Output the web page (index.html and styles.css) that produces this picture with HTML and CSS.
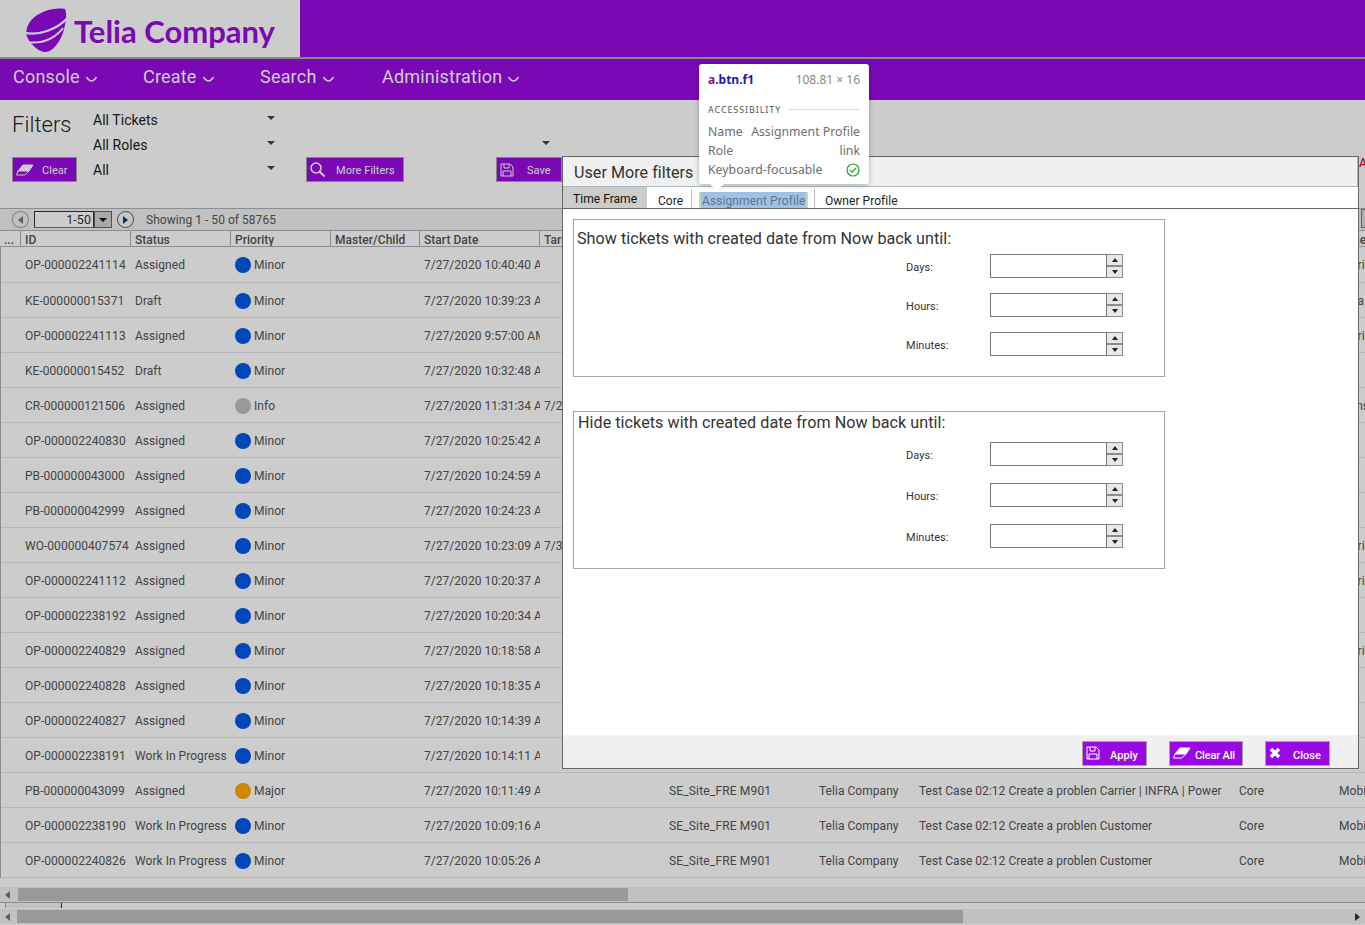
FILE: index.html
```html
<!DOCTYPE html>
<html lang="en">
<head>
    <meta charset="UTF-8">
    <title>Telia Company - Console</title>
    <link rel="stylesheet" href="styles.css">
</head>
<body>
    <!-- Top banner -->
    <header class="banner">
        <div class="logo">
            <svg class="logo-globe" viewBox="0 0 42 46" width="41" height="44" preserveAspectRatio="none">
                <path fill="#990ae3" d="M40 1C30-1 14 3 6 12 0 19-1 26 2 32c4 8 12 14 18 14 8 0 16-12 19-24 2-8 3-16 1-21z"/>
                <path fill="none" stroke="#fff" stroke-width="2.4" d="M-1 26C14 29 32 22 42 11"/>
                <path fill="none" stroke="#fff" stroke-width="2" d="M4 36c14 1 26-5 34-15"/>
            </svg>
            <span class="logo-text">Telia Company</span>
        </div>
    </header>

    <!-- Main menu -->
    <nav class="menu">
        <a class="menu-item m-console">Console <svg class="chev" viewBox="0 0 12 6" width="13" height="6"><path d="M1 1c2 3 4 4 5 4s3-1 5-4"/></svg></a>
        <a class="menu-item m-create">Create <svg class="chev" viewBox="0 0 12 6" width="13" height="6"><path d="M1 1c2 3 4 4 5 4s3-1 5-4"/></svg></a>
        <a class="menu-item m-search">Search <svg class="chev" viewBox="0 0 12 6" width="13" height="6"><path d="M1 1c2 3 4 4 5 4s3-1 5-4"/></svg></a>
        <a class="menu-item">Administration <svg class="chev" viewBox="0 0 12 6" width="13" height="6"><path d="M1 1c2 3 4 4 5 4s3-1 5-4"/></svg></a>
    </nav>

    <!-- Filters -->
    <section class="filters">
        <div class="filters-left">
            <h2>Filters</h2>
            <a class="btn btn-clear">
                <svg class="ico ico-eraser" viewBox="0 0 18 12" width="18" height="12"><path class="solid" d="M7 1h10l-4 6H2z"/><path d="M2 7L.5 11h8L13 7"/></svg>
                Clear
            </a>
        </div>
        <div class="filters-selects">
            <div class="select">All Tickets<i class="arrow"></i></div>
            <div class="select">All Roles<i class="arrow"></i></div>
            <div class="select">All<i class="arrow"></i></div>
        </div>
        <a class="btn btn-more">
            <svg class="ico ico-search" viewBox="0 0 15 15" width="15" height="15"><circle cx="6" cy="6" r="5"/><path d="M9.5 9.5l5 5" stroke-width="2"/></svg>
            More Filters
        </a>
        <div class="filters-right">
            <i class="arrow"></i>
            <a class="btn btn-save">
                <svg class="ico" viewBox="0 0 14 14" width="14" height="14"><path d="M1 1h9l3 3v9H1zM4 1v4h5V1M3 13V8h8v5"/></svg>
                Save
            </a>
        </div>
        <span class="alert-edge">Al</span>
    </section>

    <!-- Pager -->
    <div class="pager">
        <span class="pager-wrap"><span class="pager-btn"><i class="tri tri-left"></i></span></span>
        <span class="pager-input">1-50</span>
        <span class="pager-drop"><i class="arrow"></i></span>
        <span class="pager-wrap pager-next"><span class="pager-btn"><i class="tri tri-right"></i></span></span>
        <span class="pager-text">Showing 1 - 50 of 58765</span>
        <span class="pager-edge"></span>
    </div>

    <!-- Ticket grid -->
    <div class="grid-head">
        <span class="h-more">...</span>
        <span class="h-id">ID</span>
        <span class="h-status">Status</span>
        <span class="h-priority">Priority</span>
        <span class="h-master">Master/Child</span>
        <span class="h-date">Start Date</span>
        <span class="h-target">Target Date</span>
        <span class="h-rest"></span>
        <span class="h-last">Zone</span>
    </div>
    <div class="grid-body">
        <div class="row"><span>OP-000002241114</span><span>Assigned</span><span class="pri"><i class="dot minor"></i>Minor</span><span class="date">7/27/2020 10:40:40 AM</span><span class="edge">Carrier</span></div>
        <div class="row"><span>KE-000000015371</span><span>Draft</span><span class="pri"><i class="dot minor"></i>Minor</span><span class="date">7/27/2020 10:39:23 AM</span><span class="edge">Data</span></div>
        <div class="row"><span>OP-000002241113</span><span>Assigned</span><span class="pri"><i class="dot minor"></i>Minor</span><span class="date">7/27/2020 9:57:00 AM</span><span class="edge">Carrier</span></div>
        <div class="row"><span>KE-000000015452</span><span>Draft</span><span class="pri"><i class="dot minor"></i>Minor</span><span class="date">7/27/2020 10:32:48 AM</span></div>
        <div class="row"><span>CR-000000121506</span><span>Assigned</span><span class="pri"><i class="dot info"></i>Info</span><span class="date">7/27/2020 11:31:34 AM</span><span>7/27/2020</span><span class="edge">Transport</span></div>
        <div class="row"><span>OP-000002240830</span><span>Assigned</span><span class="pri"><i class="dot minor"></i>Minor</span><span class="date">7/27/2020 10:25:42 AM</span></div>
        <div class="row"><span>PB-000000043000</span><span>Assigned</span><span class="pri"><i class="dot minor"></i>Minor</span><span class="date">7/27/2020 10:24:59 AM</span></div>
        <div class="row"><span>PB-000000042999</span><span>Assigned</span><span class="pri"><i class="dot minor"></i>Minor</span><span class="date">7/27/2020 10:24:23 AM</span></div>
        <div class="row"><span>WO-000000407574</span><span>Assigned</span><span class="pri"><i class="dot minor"></i>Minor</span><span class="date">7/27/2020 10:23:09 AM</span><span>7/30/2020</span><span class="edge">Carrier</span></div>
        <div class="row"><span>OP-000002241112</span><span>Assigned</span><span class="pri"><i class="dot minor"></i>Minor</span><span class="date">7/27/2020 10:20:37 AM</span><span class="edge">Carrier</span></div>
        <div class="row"><span>OP-000002238192</span><span>Assigned</span><span class="pri"><i class="dot minor"></i>Minor</span><span class="date">7/27/2020 10:20:34 AM</span></div>
        <div class="row"><span>OP-000002240829</span><span>Assigned</span><span class="pri"><i class="dot minor"></i>Minor</span><span class="date">7/27/2020 10:18:58 AM</span><span class="edge">Carrier</span></div>
        <div class="row"><span>OP-000002240828</span><span>Assigned</span><span class="pri"><i class="dot minor"></i>Minor</span><span class="date">7/27/2020 10:18:35 AM</span></div>
        <div class="row"><span>OP-000002240827</span><span>Assigned</span><span class="pri"><i class="dot minor"></i>Minor</span><span class="date">7/27/2020 10:14:39 AM</span></div>
        <div class="row"><span>OP-000002238191</span><span>Work In Progress</span><span class="pri"><i class="dot minor"></i>Minor</span><span class="date">7/27/2020 10:14:11 AM</span></div>
        <div class="row"><span>PB-000000043099</span><span>Assigned</span><span class="pri"><i class="dot major"></i>Major</span><span class="date">7/27/2020 10:11:49 AM</span><span></span><span class="site">SE_Site_FRE M901</span><span>Telia Company</span><span>Test Case 02:12 Create a problen Carrier | INFRA | Power</span><span>Core</span><span>Mobile</span></div>
        <div class="row"><span>OP-000002238190</span><span>Work In Progress</span><span class="pri"><i class="dot minor"></i>Minor</span><span class="date">7/27/2020 10:09:16 AM</span><span></span><span class="site">SE_Site_FRE M901</span><span>Telia Company</span><span>Test Case 02:12 Create a problen Customer</span><span>Core</span><span>Mobile</span></div>
        <div class="row"><span>OP-000002240826</span><span>Work In Progress</span><span class="pri"><i class="dot minor"></i>Minor</span><span class="date">7/27/2020 10:05:26 AM</span><span></span><span class="site">SE_Site_FRE M901</span><span>Telia Company</span><span>Test Case 02:12 Create a problen Customer</span><span>Core</span><span>Mobile</span></div>
    </div>

    <!-- Scrollbars -->
    <div class="scroll scroll-inner"><i class="tri tri-left"></i><span class="thumb thumb-inner"></span></div>
    <div class="scroll-gap"><span class="gap-mark"></span></div>
    <div class="scroll scroll-page"><i class="tri tri-left"></i><span class="thumb thumb-page"></span><i class="tri tri-right"></i></div>

    <!-- Dim layer behind the dialog -->
    <div class="overlay"></div>

    <!-- Dialog -->
    <div class="dialog">
        <div class="dialog-title">User More filters</div>
        <div class="tabs">
            <a class="tab tab-active">Time Frame</a>
            <a class="tab tab-core">Core</a>
            <a class="tab tab-assign"><span class="tab-hl">Assignment Profile</span></a>
            <a class="tab tab-owner">Owner Profile</a>
        </div>
        <div class="dialog-body">
            <fieldset class="group">
                <h3>Show tickets with created date from Now back until:</h3>
                <div class="field"><label>Days:</label><span class="num"></span><span class="spin"><b><i class="up"></i></b><b><i class="down"></i></b></span></div>
                <div class="field"><label>Hours:</label><span class="num"></span><span class="spin"><b><i class="up"></i></b><b><i class="down"></i></b></span></div>
                <div class="field"><label>Minutes:</label><span class="num"></span><span class="spin"><b><i class="up"></i></b><b><i class="down"></i></b></span></div>
            </fieldset>
            <fieldset class="group group-hide">
                <h3>Hide tickets with created date from Now back until:</h3>
                <div class="field"><label>Days:</label><span class="num"></span><span class="spin"><b><i class="up"></i></b><b><i class="down"></i></b></span></div>
                <div class="field"><label>Hours:</label><span class="num"></span><span class="spin"><b><i class="up"></i></b><b><i class="down"></i></b></span></div>
                <div class="field"><label>Minutes:</label><span class="num"></span><span class="spin"><b><i class="up"></i></b><b><i class="down"></i></b></span></div>
            </fieldset>
        </div>
        <div class="dialog-foot">
            <a class="btn btn-apply">
                <svg class="ico" viewBox="0 0 14 14" width="14" height="14"><path d="M1 1h9l3 3v9H1zM4 1v4h5V1M3 13V8h8v5"/></svg>
                Apply
            </a>
            <a class="btn btn-clearall">
                <svg class="ico ico-eraser" viewBox="0 0 18 12" width="18" height="12"><path class="solid" d="M7 1h10l-4 6H2z"/><path d="M2 7L.5 11h8L13 7"/></svg>
                Clear All
            </a>
            <a class="btn btn-close">
                <svg class="ico ico-x" viewBox="0 0 12 12" width="12" height="12"><path d="M2 2l8 8M10 2l-8 8"/></svg>
                Close
            </a>
        </div>
    </div>

    <!-- Inspector tooltip -->
    <div class="inspect">
        <div class="inspect-top">
            <span class="inspect-sel"><b class="tag">a</b><b class="cls">.btn.f1</b></span>
            <span class="inspect-size">108.81 × 16</span>
        </div>
        <div class="inspect-sec">ACCESSIBILITY</div>
        <div class="inspect-row"><span>Name</span><span>Assignment Profile</span></div>
        <div class="inspect-row"><span>Role</span><span>link</span></div>
        <div class="inspect-row"><span>Keyboard-focusable</span>
            <svg viewBox="0 0 14 14" width="14" height="14"><circle cx="7" cy="7" r="6" fill="none" stroke="#1fa81f" stroke-width="1.2"/><path d="M4 7l2.2 2.2L10 5" fill="none" stroke="#1fa81f" stroke-width="1.2"/></svg>
        </div>
    </div>
</body>
</html>
```

FILE: styles.css
```css
/* general */
body {
    margin: 0;
    width: 1365px;
    height: 925px;
    overflow: hidden;
    position: relative;
    background: #fff;
    font-family: Roboto, sans-serif;
    font-size: 12px;
    letter-spacing: 0.04px;
    color: #555;
}

/* banner and menu */
.banner {
    height: 57px;
    background: #990ae3;
    border-bottom: 2px solid #a9a9a9;
}

.logo {
    width: 300px;
    height: 57px;
    background: #fff;
    display: flex;
    align-items: center;
    padding-left: 26px;
    box-sizing: border-box;
}

.logo-globe {
    overflow: visible;
    flex: none;
    margin-top: 2px;
}

.logo-text {
    margin: 4px 0 0 7px;
    font-family: Lato, sans-serif;
    font-weight: 700;
    font-size: 31px;
    letter-spacing: 0;
    color: #990ae3;
}

.menu {
    height: 41px;
    background: #990ae3;
    display: flex;
    align-items: center;
    padding-left: 13px;
    font-size: 18px;
    letter-spacing: 0.2px;
    color: #fff;
    box-sizing: border-box;
}

.menu-item {
    display: flex;
    align-items: center;
    gap: 5px;
    padding-bottom: 6px;
}

.m-console { width: 130px; }
.m-create { width: 117px; }
.m-search { width: 122px; }

.chev {
    margin-top: 4px;
    fill: none;
    stroke: #fff;
    stroke-width: 1.4;
}

/* filters */
.filters {
    position: relative;
    height: 108px;
    display: flex;
    box-sizing: border-box;
    padding: 8px 0 0 12px;
}

.filters-left {
    width: 81px;
    flex: none;
}

.filters-left h2 {
    margin: 3px 0 18px;
    font-weight: 300;
    font-size: 22px;
    line-height: 28px;
    color: #222;
}

.filters-selects {
    width: 182px;
    flex: none;
}

.select {
    position: relative;
    height: 25px;
    line-height: 25px;
    font-size: 14px;
    color: #222;
}

.select .arrow {
    position: absolute;
    right: 0;
    top: 8px;
}

.arrow {
    display: block;
    width: 0;
    height: 0;
    border-left: 4px solid transparent;
    border-right: 4px solid transparent;
    border-top: 4px solid #444;
}

.btn {
    display: flex;
    align-items: center;
    box-sizing: border-box;
    height: 25px;
    padding-top: 2px;
    background: #990ae3;
    border: 1px solid #a6a6a6;
    color: #fff;
    font-size: 11px;
    font-weight: 500;
}

.ico {
    flex: none;
    margin-bottom: 2px;
    fill: none;
    stroke: #fff;
    stroke-width: 1;
}

.ico .solid {
    fill: #fff;
}

.ico-search {
    stroke-width: 1.6;
}

.ico-x {
    stroke-width: 3.4;
}

.btn-clear {
    width: 65px;
    padding-left: 3px;
    gap: 8px;
    font-weight: 400;
}

.btn-more {
    width: 98px;
    margin: 49px 0 0 31px;
    padding-left: 3px;
    gap: 11px;
    font-weight: 400;
    flex: none;
}

.filters-right {
    margin-left: 92px;
    width: 66px;
    padding-top: 33px;
}

.filters-right .arrow {
    margin: 0 0 12px 46px;
}

.btn-save {
    width: 66px;
    padding-left: 3px;
    gap: 13px;
    font-weight: 400;
}

.alert-edge {
    position: absolute;
    left: 1359px;
    top: 56px;
    color: #e0143c;
    font-size: 12px;
    font-weight: 500;
}

/* pager */
.pager {
    height: 23px;
    box-sizing: border-box;
    background: #f2f2f2;
    border-top: 1px solid #aab2ba;
    border-bottom: 1px solid #aab2ba;
    display: flex;
    align-items: center;
    padding-left: 11px;
    position: relative;
}

.pager-wrap {
    width: 18px;
    height: 18px;
    background: #e9ebe2;
    display: flex;
    align-items: center;
    justify-content: center;
}

.pager-next {
    margin-left: 4px;
    background: linear-gradient(to right, #f2f2f2 50%, #e9ebe2 50%);
}

.pager-btn {
    width: 17px;
    height: 17px;
    border: 1px solid #9a9a9a;
    border-radius: 50%;
    box-sizing: border-box;
    display: flex;
    align-items: center;
    justify-content: center;
    background: #f2f2f2;
}

.pager-next .pager-btn {
    border-color: #45607a;
    background: #f8f8f8;
}

.pager-input {
    margin-left: 5px;
    width: 60px;
    height: 17px;
    line-height: 15px;
    box-sizing: border-box;
    border: 1px solid #333;
    border-bottom-color: #777;
    background: #fff;
    text-align: right;
    padding-right: 2px;
    font-size: 12.5px;
    color: #333;
}

.pager-drop {
    width: 18px;
    height: 17px;
    box-sizing: border-box;
    border: 1px solid #666;
    background: #d2d2d2;
    display: flex;
    align-items: center;
    justify-content: center;
}

.pager-drop .arrow {
    border-top-color: #111;
}

.pager-text {
    margin-left: 12px;
    font-size: 12px;
}

.pager-edge {
    position: absolute;
    left: 1361px;
    top: 0;
    width: 6px;
    height: 19px;
    box-sizing: border-box;
    border: 1px solid #777;
    background: #ddd;
}

.tri {
    display: block;
    width: 0;
    height: 0;
    border-top: 4px solid transparent;
    border-bottom: 4px solid transparent;
}

.tri-left { border-right: 5px solid #777; }
.tri-right { border-left: 5px solid #333; }
.pager-next .tri-right { border-left-color: #123f70; }

/* grid */
.grid-head {
    height: 16px;
    box-sizing: border-box;
    border-bottom: 1px solid #aab2ba;
    display: flex;
    font-weight: 500;
    line-height: 19px;
    white-space: nowrap;
    overflow: hidden;
}

.grid-head span {
    box-sizing: border-box;
    flex: none;
    padding-left: 4px;
    border-right: 1px solid #aab2ba;
}

.h-more { width: 21px; }
.h-id { width: 110px; }
.h-status { width: 100px; }
.h-priority { width: 100px; }
.h-master { width: 89px; }
.h-date { width: 120px; }
.h-target { width: 125px; }
.h-rest { width: 670px; }
.grid-head .h-last { border-right: 0; padding-left: 4px; }

.grid-body {
    height: 631px;
    border-left: 1px solid #aab2ba;
}

.row {
    height: 35px;
    box-sizing: border-box;
    border-bottom: 1px solid #e6e6e6;
    padding: 2px 0 0 24px;
    display: grid;
    grid-template-columns: 110px 100px 189px 120px 125px 150px 100px 320px 100px 40px;
    align-items: center;
    white-space: nowrap;
    overflow: hidden;
}

.row:first-child {
    height: 36px;
    padding-top: 0;
}

.date {
    overflow: hidden;
    width: 116px;
}

.site {
    letter-spacing: 0.16px;
}

.edge {
    grid-column: 10;
}

.pri {
    display: flex;
    align-items: center;
    gap: 3px;
}

.dot {
    width: 16px;
    height: 16px;
    border-radius: 50%;
}

.minor { background: #0059ea; }
.info { background: #c0c0c0; }
.major { background: #ffaa00; }

/* scrollbars */
.scroll {
    display: flex;
    align-items: center;
    background: #f2f2f2;
    box-sizing: border-box;
    padding-left: 5px;
}

.scroll-inner {
    height: 16px;
    margin-top: 9px;
    border-bottom: 1px solid #aab2ba;
}

.scroll-inner .thumb {
    margin-left: 8px;
}

.scroll-gap {
    height: 6px;
}

.gap-mark {
    display: block;
    width: 57px;
    height: 5px;
    margin-left: 5px;
    box-sizing: border-box;
    background: #f2f2f2;
    border-left: 1px solid #aaa;
    border-right: 1px solid #333;
}

.scroll-page {
    height: 15px;
}

.scroll-page .tri-right {
    margin-left: auto;
    margin-right: 5px;
}

.thumb {
    display: block;
    height: 13px;
    margin-left: 7px;
    background: #c0c0c0;
}

.thumb-inner { width: 610px; }
.thumb-page { width: 946px; }

/* dim layer */
.overlay {
    position: absolute;
    inset: 0;
    background: rgba(0, 0, 0, 0.2);
}

/* dialog */
.dialog {
    position: absolute;
    left: 562px;
    top: 156px;
    width: 797px;
    height: 613px;
    box-sizing: border-box;
    background: #fff;
    border: 1px solid #666;
    display: flex;
    flex-direction: column;
}

.dialog-title {
    height: 30px;
    box-sizing: border-box;
    background: #f0f0f0;
    border-bottom: 1px solid #a9b8c0;
    border-right: 1px solid #a9b8c0;
    padding-left: 11px;
    line-height: 32px;
    font-size: 16.1px;
    color: #333;
}

.tabs {
    height: 22px;
    box-sizing: border-box;
    border-bottom: 1px solid #666;
    display: flex;
    color: #222;
}

.tab {
    display: block;
    box-sizing: border-box;
    height: 19px;
    margin-top: 2px;
    padding-top: 5px;
    line-height: 14px;
    border-right: 1px solid #bbb;
}

.tab-active {
    width: 84px;
    height: 21px;
    margin-top: 0;
    background: #ccc;
    padding: 5px 0 0 10px;
    border-right: 0;
    color: #111;
}

.tab-core { width: 45px; padding-left: 11px; }
.tab-assign { width: 123px; padding: 3px 0 0 9px; }
.tab-owner { padding-left: 10px; border-right: 0; }

.tab-hl {
    display: inline-block;
    height: 16px;
    line-height: 18px;
    background: #9fc1e6;
    box-shadow: -2px 0 0 #c3dcb1, 2px 0 0 #c3dcb1;
    padding: 0 1px;
    letter-spacing: 0.1px;
    color: #62748c;
}

.dialog-body {
    flex: 1;
    padding: 10px 0 0 10px;
}

.group {
    margin: 0;
    padding: 0;
    width: 592px;
    height: 158px;
    box-sizing: border-box;
    border: 1px solid #a6a6a6;
}

.group h3 {
    margin: 9px 0 0 3px;
    height: 20px;
    line-height: 20px;
    font-weight: 400;
    font-size: 16.15px;
    color: #333;
}

.group-hide {
    margin-top: 34px;
}

.field {
    display: flex;
    align-items: center;
    height: 24px;
    margin: 0 0 15px 332px;
}

.group h3 + .field {
    margin-top: 5px;
}

.group-hide h3 {
    margin: 1px 0 0 4px;
}

.group-hide .field {
    margin-bottom: 17px;
}

.group-hide h3 + .field {
    margin-top: 9px;
}

.field label {
    width: 84px;
    padding-top: 2px;
    font-size: 11px;
    color: #333;
}

.num {
    width: 117px;
    height: 24px;
    box-sizing: border-box;
    border: 1px solid #777;
}

.spin {
    width: 16px;
    height: 24px;
    display: flex;
    flex-direction: column;
}

.spin b {
    flex: 1;
    display: flex;
    align-items: center;
    justify-content: center;
    box-sizing: border-box;
    background: #e8e8e8;
    border: 1px solid #8c8c8c;
    border-left: 0;
}

.up, .down {
    display: block;
    width: 0;
    height: 0;
    border-left: 3px solid transparent;
    border-right: 3px solid transparent;
}

.up { border-bottom: 4px solid #222; }
.down { border-top: 4px solid #222; }

.dialog-foot {
    height: 33px;
    background: #f0f0f0;
    display: flex;
    padding: 6px 0 0 519px;
    box-sizing: border-box;
}

.dialog-foot .btn {
    height: 25px;
    padding: 4px 0 0 3px;
}

.dialog-foot .ico {
    margin-bottom: 6px;
}

.btn-apply { width: 65px; gap: 10px; }
.btn-clearall { width: 74px; margin-left: 22px; gap: 4px; letter-spacing: -0.15px; }
.btn-close { width: 65px; margin-left: 22px; gap: 12px; }

/* inspector tooltip */
.inspect {
    position: absolute;
    left: 699px;
    top: 64px;
    width: 170px;
    height: 120px;
    box-sizing: border-box;
    padding: 7px 9px;
    background: #fff;
    border-radius: 3px;
    box-shadow: 0 1px 5px rgba(0, 0, 0, 0.3);
    font-family: "Noto Sans", sans-serif;
    font-size: 12.3px;
    letter-spacing: 0;
    color: #6e6e6e;
}

.inspect::after {
    content: "";
    position: absolute;
    left: 11px;
    top: 120px;
    border-left: 7px solid transparent;
    border-right: 7px solid transparent;
    border-top: 7px solid #fff;
}

.inspect-top {
    display: flex;
    justify-content: space-between;
    align-items: center;
    height: 16px;
}

.inspect-sel {
    font-size: 12px;
}

.tag { color: #881280; }
.cls { color: #1a1aa6; }

.inspect-size {
    color: #888;
    font-size: 12px;
}

.inspect-sec {
    display: flex;
    align-items: center;
    gap: 7px;
    margin: 15px 0 6px;
    height: 14px;
    font-size: 9px;
    letter-spacing: 0.9px;
    color: #555;
}

.inspect-sec::after {
    content: "";
    flex: 1;
    border-top: 1px solid #ddd;
}

.inspect-row {
    display: flex;
    justify-content: space-between;
    align-items: center;
    height: 19px;
}
```
